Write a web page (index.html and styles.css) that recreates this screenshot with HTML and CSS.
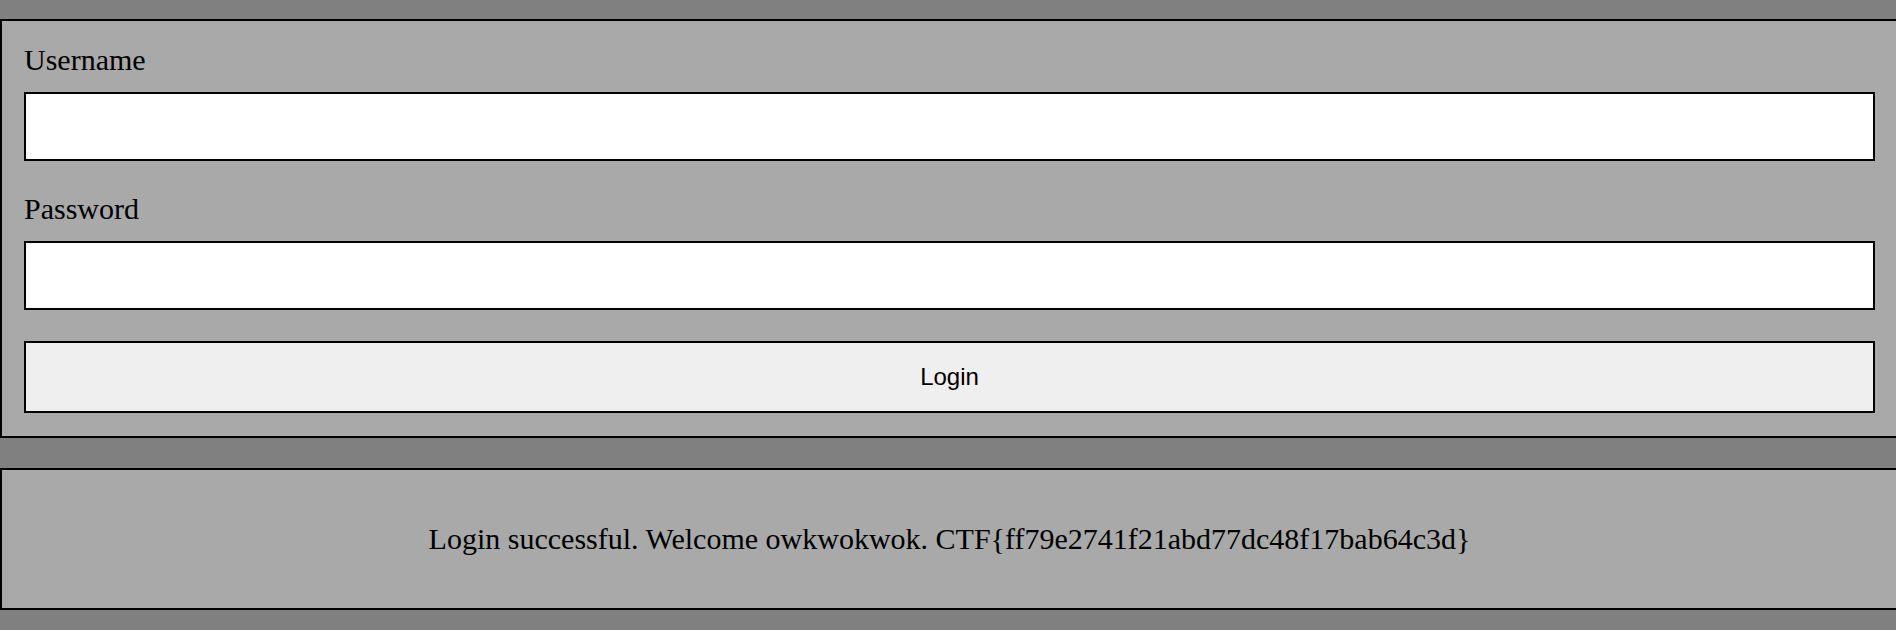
FILE: index.html
```html
<!DOCTYPE html>
<html lang="en">
<head>
<meta charset="utf-8">
<title>Login</title>
<link rel="stylesheet" href="styles.css">
</head>
<body>
<form class="panel login-form">
  <label class="field-label" for="username">Username</label>
  <input class="field-input" type="text" id="username" name="username">
  <label class="field-label" for="password">Password</label>
  <input class="field-input" type="password" id="password" name="password">
  <button class="login-button" type="submit">Login</button>
</form>
<div class="panel message">Login successful. Welcome owkwokwok. CTF{ff79e2741f21abd77dc48f17bab64c3d}</div>
</body>
</html>
```

FILE: styles.css
```css
html, body {
  margin: 0;
  padding: 0;
}
body {
  background: #808080;
  font-family: "Liberation Serif", "Times New Roman", serif;
  font-size: 30px;
  line-height: 34px;
  color: #000;
  padding: 19px 0 20px;
}
.panel {
  background: #a9a9a9;
  border: 2px solid #000;
  border-right: 0;
}
.login-form {
  display: flex;
  flex-direction: column;
  padding: 22px 21px 23px 22px;
  margin: 0 0 30px;
}
.field-label {
  display: block;
  margin-bottom: 15px;
}
.field-input {
  display: block;
  box-sizing: border-box;
  width: 100%;
  height: 69px;
  margin: 0 0 31px;
  border: 2px solid #000;
  background: #fff;
  padding: 0 10px;
  font: inherit;
}
.login-button {
  display: block;
  box-sizing: border-box;
  width: 100%;
  height: 72px;
  margin: 0;
  border: 2px solid #000;
  background: #efefef;
  font-family: "Liberation Sans", Arial, sans-serif;
  font-size: 24px;
  color: #000;
  padding: 0;
}
.message {
  padding: 52px 21px 52px 22px;
  text-align: center;
}
```
